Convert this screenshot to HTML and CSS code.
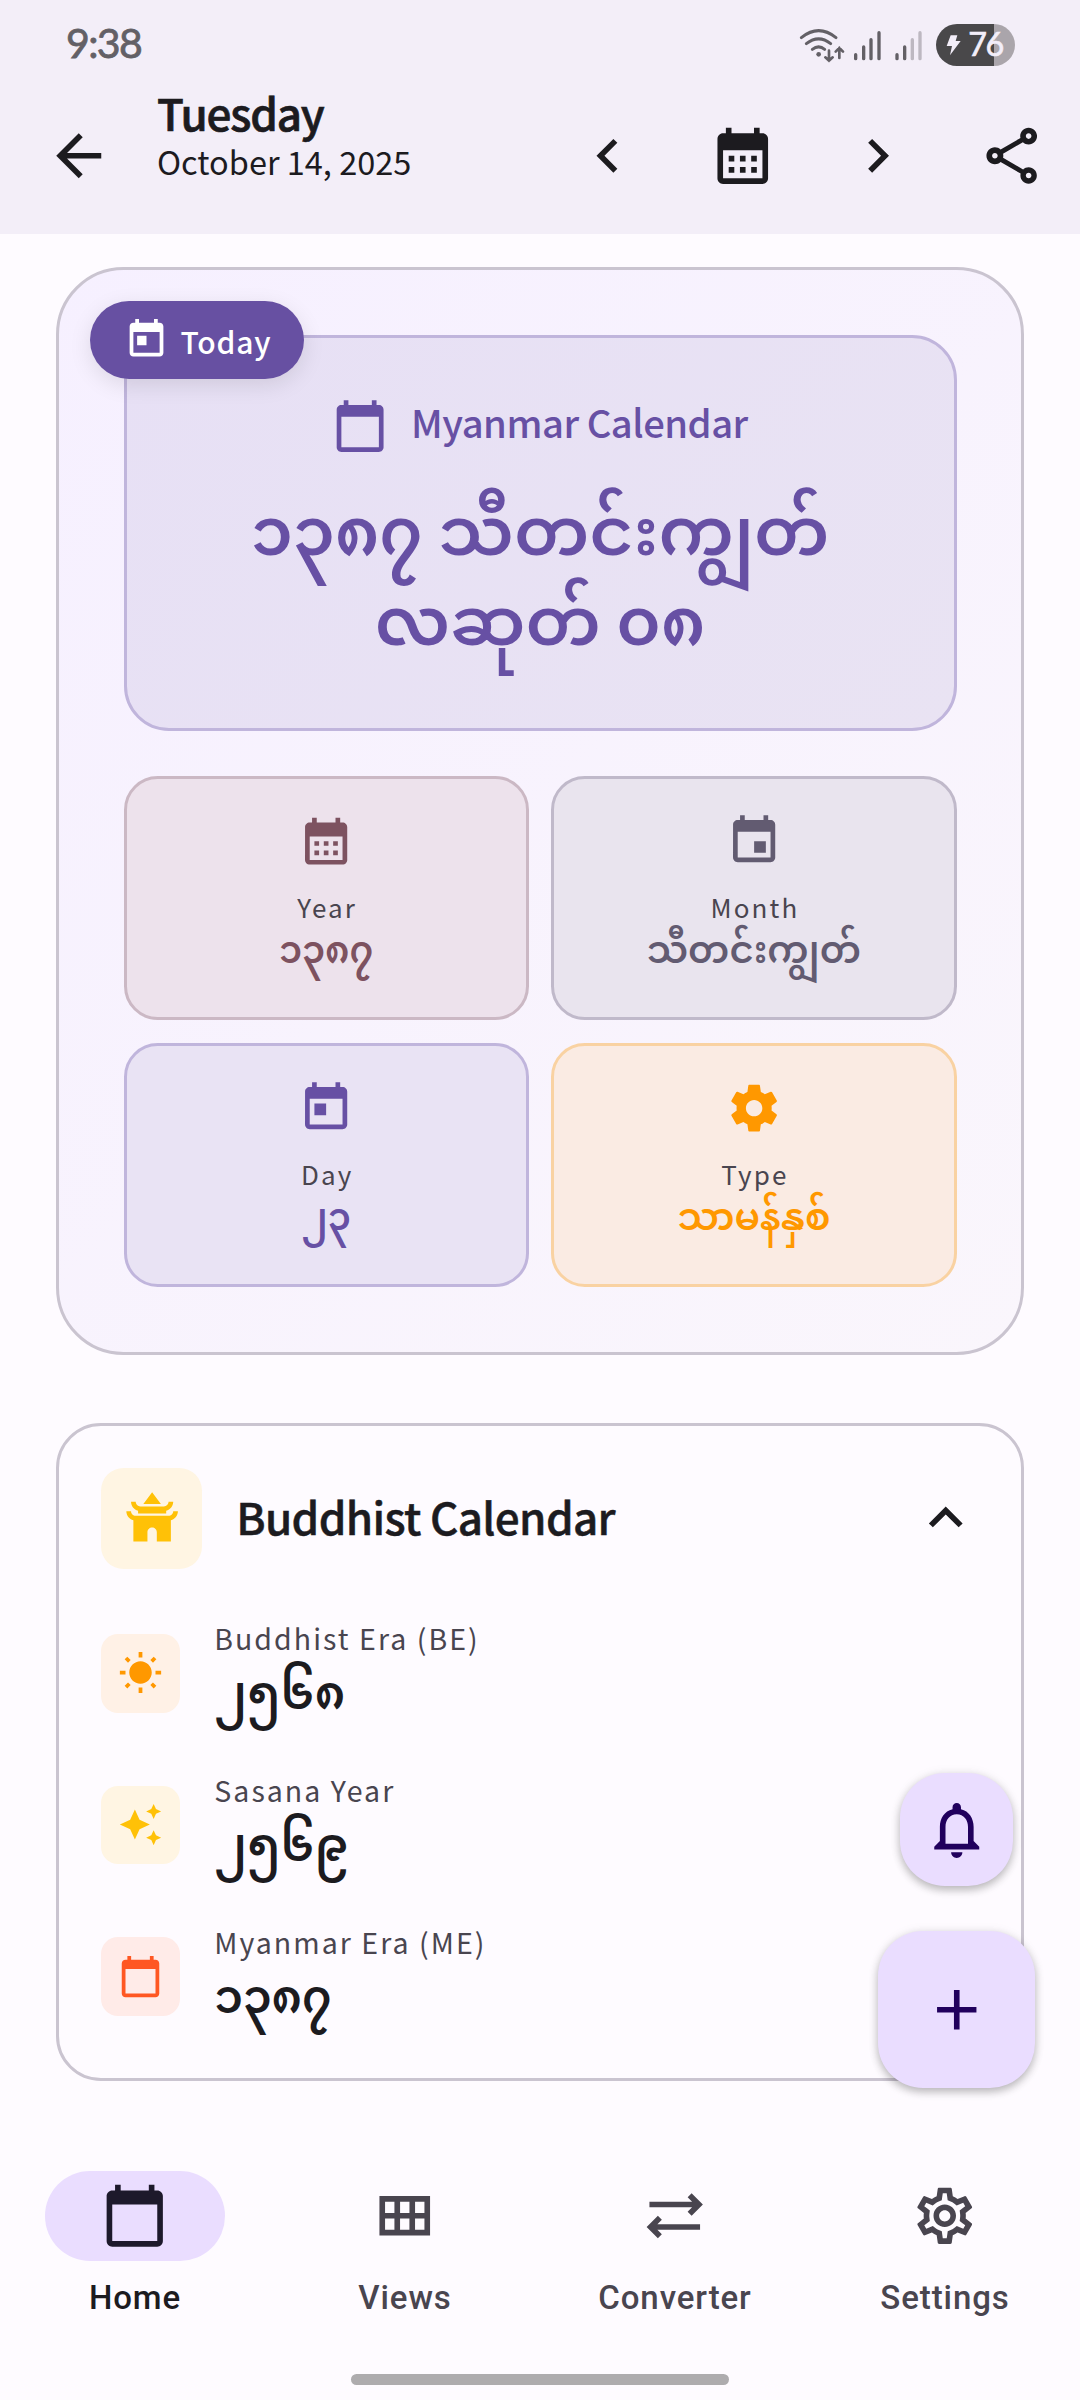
FILE: index.html
```html
<!DOCTYPE html>
<html lang="en">
<head>
<meta charset="utf-8">
<title>Myanmar Calendar</title>
<link rel="stylesheet" href="styles.css">
</head>
<body>
<svg class="defs" width="0" height="0" aria-hidden="true">
  <symbol id="back" viewBox="0 0 24 24"><path d="M20 11H7.83l5.59-5.59L12 4l-8 8 8 8 1.41-1.41L7.83 13H20v-2z"/></symbol>
  <symbol id="left" viewBox="0 0 24 24"><path d="M15.41 7.41L14 6l-6 6 6 6 1.41-1.41L10.83 12z"/></symbol>
  <symbol id="right" viewBox="0 0 24 24"><path d="M10 6L8.59 7.41 13.17 12l-4.58 4.59L10 18l6-6z"/></symbol>
  <symbol id="up" viewBox="0 0 24 24"><path d="M12 8l-6 6 1.41 1.41L12 10.83l4.59 4.58L18 14z"/></symbol>
  <symbol id="month-grid" viewBox="0 0 24 24"><path d="M19 4h-1V2h-2v2H8V2H6v2H5c-1.11 0-1.99.9-1.99 2L3 20c0 1.1.89 2 2 2h14c1.1 0 2-.9 2-2V6c0-1.1-.9-2-2-2zm0 16H5V10h14v10zM9 14H7v-2h2v2zm4 0h-2v-2h2v2zm4 0h-2v-2h2v2zm-8 4H7v-2h2v2zm4 0h-2v-2h2v2zm4 0h-2v-2h2v2z"/></symbol>
  <symbol id="share" viewBox="0 0 24 24"><path d="M18 16.08c-.76 0-1.44.3-1.96.77L8.91 12.7c.05-.23.09-.46.09-.7s-.04-.47-.09-.7l7.05-4.11c.54.5 1.25.81 2.04.81 1.66 0 3-1.34 3-3s-1.34-3-3-3-3 1.34-3 3c0 .24.04.47.09.7L8.04 9.81C7.5 9.31 6.79 9 6 9c-1.66 0-3 1.34-3 3s1.34 3 3 3c.79 0 1.5-.31 2.04-.81l7.12 4.16c-.05.21-.08.43-.08.65 0 1.61 1.31 2.92 2.92 2.92s2.92-1.31 2.92-2.92-1.31-2.92-2.92-2.92zM18 4c.55 0 1 .45 1 1s-.45 1-1 1-1-.45-1-1 .45-1 1-1zM6 13c-.55 0-1-.45-1-1s.45-1 1-1 1 .45 1 1-.45 1-1 1zm12 7.02c-.55 0-1-.45-1-1s.45-1 1-1 1 .45 1 1-.45 1-1 1z"/></symbol>
  <symbol id="today" viewBox="0 0 24 24"><path d="M19 3h-1V1h-2v2H8V1H6v2H5c-1.11 0-1.99.9-1.99 2L3 19c0 1.1.89 2 2 2h14c1.1 0 2-.9 2-2V5c0-1.1-.9-2-2-2zm0 16H5V8h14v11zM7 10h5v5H7z"/></symbol>
  <symbol id="event" viewBox="0 0 24 24"><path d="M17 12h-5v5h5v-5zM16 1v2H8V1H6v2H5c-1.11 0-1.99.9-1.99 2L3 19c0 1.1.89 2 2 2h14c1.1 0 2-.9 2-2V5c0-1.1-.9-2-2-2h-1V1h-2zm3 18H5V8h14v11z"/></symbol>
  <symbol id="calendar" viewBox="0 0 24 24"><path d="M20 3h-1V1h-2v2H7V1H5v2H4c-1.1 0-2 .9-2 2v16c0 1.1.9 2 2 2h16c1.1 0 2-.9 2-2V5c0-1.1-.9-2-2-2zm0 18H4V8h16v13z"/></symbol>
  <symbol id="gear" viewBox="0 0 24 24"><path d="M19.43 12.98c.04-.32.07-.64.07-.98s-.03-.66-.07-.98l2.11-1.65c.19-.15.24-.42.12-.64l-2-3.46c-.12-.22-.39-.3-.61-.22l-2.49 1c-.52-.4-1.08-.73-1.69-.98l-.38-2.65C14.46 2.18 14.25 2 14 2h-4c-.25 0-.46.18-.49.42l-.38 2.65c-.61.25-1.17.59-1.69.98l-2.49-1c-.23-.09-.49 0-.61.22l-2 3.46c-.13.22-.07.49.12.64l2.11 1.65c-.04.32-.07.65-.07.98s.03.66.07.98l-2.11 1.65c-.19.15-.24.42-.12.64l2 3.46c.12.22.39.3.61.22l2.49-1c.52.4 1.08.73 1.69.98l.38 2.65c.03.24.24.42.49.42h4c.25 0 .46-.18.49-.42l.38-2.65c.61-.25 1.17-.59 1.69-.98l2.49 1c.23.09.49 0 .61-.22l2-3.46c.12-.22.07-.49-.12-.64l-2.11-1.65zM12 15.5c-1.93 0-3.5-1.57-3.5-3.5s1.57-3.5 3.5-3.5 3.5 1.57 3.5 3.5-1.57 3.5-3.5 3.5z"/></symbol>
  <symbol id="gear-outline" viewBox="0 0 24 24"><path d="M19.43 12.98c.04-.32.07-.64.07-.98 0-.34-.03-.66-.07-.98l2.11-1.65c.19-.15.24-.42.12-.64l-2-3.46c-.09-.16-.26-.25-.44-.25-.06 0-.12.01-.17.03l-2.49 1c-.52-.4-1.08-.73-1.69-.98l-.38-2.65C14.46 2.18 14.25 2 14 2h-4c-.25 0-.46.18-.49.42l-.38 2.65c-.61.25-1.17.59-1.69.98l-2.49-1c-.06-.02-.12-.03-.18-.03-.17 0-.34.09-.43.25l-2 3.46c-.13.22-.07.49.12.64l2.11 1.65c-.04.32-.07.65-.07.98 0 .33.03.66.07.98l-2.11 1.65c-.19.15-.24.42-.12.64l2 3.46c.09.16.26.25.44.25.06 0 .12-.01.17-.03l2.49-1c.52.4 1.08.73 1.69.98l.38 2.65c.03.24.24.42.49.42h4c.25 0 .46-.18.49-.42l.38-2.65c.61-.25 1.17-.59 1.69-.98l2.49 1c.06.02.12.03.18.03.17 0 .34-.09.43-.25l2-3.46c.12-.22.07-.49-.12-.64l-2.11-1.65zm-1.98-1.71c.04.31.05.52.05.73 0 .21-.02.43-.05.73l-.14 1.13.89.7 1.08.84-.7 1.21-1.27-.51-1.04-.42-.9.68c-.43.32-.84.56-1.25.73l-1.06.43-.16 1.13-.2 1.35h-1.4l-.19-1.35-.16-1.13-1.06-.43c-.43-.18-.83-.41-1.23-.71l-.91-.7-1.06.43-1.27.51-.7-1.21 1.08-.84.89-.7-.14-1.13c-.03-.31-.05-.54-.05-.74s.02-.43.05-.73l.14-1.13-.89-.7-1.08-.84.7-1.21 1.27.51 1.04.42.9-.68c.43-.32.84-.56 1.25-.73l1.06-.43.16-1.13.2-1.35h1.39l.19 1.35.16 1.13 1.06.43c.43.18.83.41 1.23.71l.91.7 1.06-.43 1.27-.51.7 1.21-1.07.85-.89.7.14 1.13zM12 8c-2.21 0-4 1.79-4 4s1.79 4 4 4 4-1.79 4-4-1.79-4-4-4zm0 6c-1.1 0-2-.9-2-2s.9-2 2-2 2 .9 2 2-.9 2-2 2z"/></symbol>
  <symbol id="temple" viewBox="0 0 24 24"><path d="M21 9.02c0 1.09-.89 1.98-1.98 1.98H4.98C3.89 11 3 10.11 3 9.02H1c0 1.86 1.28 3.4 3 3.84V22h6v-4c0-1.1.9-2 2-2s2 .9 2 2v4h6v-9.14c1.72-.44 3-1.98 3-3.84h-2zM6 8.86V10h12V8.86c1.72-.44 3-1.98 3-3.84h-2C19 6.11 18.11 7 17.02 7H6.98C5.89 7 5 6.11 5 5.02H3c0 1.86 1.28 3.4 3 3.84zM12 1L8.25 6h7.5L12 1z"/></symbol>
  <symbol id="sun" viewBox="0 0 24 24"><path d="M6.76 4.84l-1.8-1.79-1.41 1.41 1.79 1.79 1.42-1.41zM4 10.5H1v2h3v-2zm9-9.95h-2V3.5h2V.55zm7.45 3.91l-1.41-1.41-1.79 1.79 1.41 1.41 1.79-1.79zm-3.21 13.7l1.79 1.8 1.41-1.41-1.8-1.79-1.4 1.4zM20 10.5v2h3v-2h-3zm-8-5c-3.31 0-6 2.69-6 6s2.69 6 6 6 6-2.69 6-6-2.69-6-6-6zm-1 16.95h2V19.5h-2v2.95zm-7.45-3.91l1.41 1.41 1.79-1.8-1.41-1.41-1.79 1.8z"/></symbol>
  <symbol id="sparkle" viewBox="0 0 24 24"><path d="M19 9l1.25-2.75L23 5l-2.75-1.25L19 1l-1.25 2.75L15 5l2.75 1.25L19 9zm-7.5.5L9 4 6.5 9.5 1 12l5.5 2.5L9 20l2.5-5.5L17 12l-5.5-2.5zM19 15l-1.25 2.75L15 19l2.75 1.25L19 23l1.25-2.75L23 19l-2.75-1.25L19 15z"/></symbol>
  <symbol id="bell" viewBox="0 0 24 24"><path d="M12 22c1.1 0 2-.9 2-2h-4c0 1.1.9 2 2 2zm6-6v-5c0-3.07-1.63-5.64-4.5-6.32V4c0-.83-.67-1.5-1.5-1.5s-1.5.67-1.5 1.5v.68C7.64 5.36 6 7.92 6 11v5l-2 2v1h16v-1l-2-2zm-2 1H8v-6c0-2.48 1.51-4.5 4-4.5s4 2.02 4 4.5v6z"/></symbol>
  <symbol id="plus" viewBox="0 0 24 24"><path d="M19 13h-6v6h-2v-6H5v-2h6V5h2v6h6v2z"/></symbol>
  <symbol id="grid" viewBox="0 0 24 24"><path d="M3 5v14h18V5H3zm16 6h-3.33V7H19v4zm-5.33 0h-3.33V7h3.33v4zM8.33 7v4H5V7h3.33zM5 17v-4h3.33v4H5zm5.33 0v-4h3.33v4h-3.33zm5.33 0v-4H19v4h-3.33z"/></symbol>
  <symbol id="swap" viewBox="0 0 24 24"><path d="M22 8l-4-4-1.41 1.41L18.17 7H3v2h15.17l-1.59 1.59L18 12l4-4zM2 16l4 4 1.41-1.41L5.83 17H21v-2H5.83l1.59-1.59L6 12l-4 4z"/></symbol>
</svg>

<header class="top">
  <div class="status">
    <span class="clock">9:38</span>
    <svg class="indicators" width="240" height="70" viewBox="0 0 720 210">
      <g fill="none" stroke="#636066" stroke-width="9" stroke-linecap="round">
        <path d="M34 83Q86 41 138 83M49 101Q86 72 122 101M67 118Q86 103 104 118"/>
        <path d="M117 122V152M106 142L117 152L128 142M148 144V114M137 125L148 114L159 125" stroke-width="8"/>
        <path d="M197 134V146M221 111V146M243 89V146M267 68V146M321 134V146M344 111V146" stroke-width="10"/>
        <path d="M367 89V146M390 68V146" stroke="#bdb8c1" stroke-width="10"/>
      </g>
      <circle cx="86" cy="133" r="7" fill="#636066"/>
      <path d="M501 42H612V168H501A63 63 0 0 1 501 42Z" fill="#49484a"/>
      <path d="M612 42A63 63 0 0 1 612 168Z" fill="#aaa5ab"/>
      <path d="M482 76H502L497 93H512L480 136L486 108H470Z" fill="#f3eef9"/>
      <text x="535" y="139" class="charge">76</text>
    </svg>
  </div>
  <div class="toolbar">
    <svg class="i24 back"><use href="#back"/></svg>
    <div class="heading">
      <h1 class="weekday">Tuesday</h1>
      <p class="date">October 14, 2025</p>
    </div>
    <div class="actions">
      <svg class="i24"><use href="#left"/></svg>
      <svg class="i24"><use href="#month-grid"/></svg>
      <svg class="i24"><use href="#right"/></svg>
      <svg class="i24"><use href="#share"/></svg>
    </div>
  </div>
</header>

<main class="content">
  <section class="summary">
    <div class="badge"><svg class="i16"><use href="#today"/></svg><span>Today</span></div>
    <div class="hero">
      <div class="hero-head"><svg class="i20"><use href="#calendar"/></svg><span class="hero-label">Myanmar Calendar</span></div>
      <div class="hero-date" lang="my">၁၃၈၇ သီတင်းကျွတ်<br>လဆုတ် ၀၈</div>
    </div>
    <div class="tiles">
      <div class="tile year"><svg class="i20"><use href="#month-grid"/></svg><span class="tile-label">Year</span><span class="tile-value" lang="my">၁၃၈၇</span></div>
      <div class="tile month"><svg class="i20"><use href="#event"/></svg><span class="tile-label">Month</span><span class="tile-value" lang="my">သီတင်းကျွတ်</span></div>
      <div class="tile day"><svg class="i20"><use href="#today"/></svg><span class="tile-label">Day</span><span class="tile-value" lang="my">၂၃</span></div>
      <div class="tile type"><svg class="i20"><use href="#gear"/></svg><span class="tile-label">Type</span><span class="tile-value" lang="my">သာမန်နှစ်</span></div>
    </div>
  </section>

  <section class="details">
    <div class="details-head">
      <span class="chip chip-large amber"><svg class="i20"><use href="#temple"/></svg></span>
      <h2 class="details-title">Buddhist Calendar</h2>
      <svg class="i24"><use href="#up"/></svg>
    </div>
    <div class="row">
      <span class="chip orange"><svg class="i16"><use href="#sun"/></svg></span>
      <div><div class="row-label">Buddhist Era (BE)</div><div class="row-value" lang="my">၂၅၆၈</div></div>
    </div>
    <div class="row">
      <span class="chip amber"><svg class="i16"><use href="#sparkle"/></svg></span>
      <div><div class="row-label">Sasana Year</div><div class="row-value" lang="my">၂၅၆၉</div></div>
    </div>
    <div class="row">
      <span class="chip red"><svg class="i16"><use href="#calendar"/></svg></span>
      <div><div class="row-label">Myanmar Era (ME)</div><div class="row-value" lang="my">၁၃၈၇</div></div>
    </div>
  </section>
</main>

<nav class="nav">
  <div class="nav-item active"><span class="pill"><svg class="i24"><use href="#calendar"/></svg></span><span>Home</span></div>
  <div class="nav-item"><span class="pill"><svg class="i24"><use href="#grid"/></svg></span><span>Views</span></div>
  <div class="nav-item"><span class="pill"><svg class="i24"><use href="#swap"/></svg></span><span>Converter</span></div>
  <div class="nav-item"><span class="pill"><svg class="i24"><use href="#gear-outline"/></svg></span><span>Settings</span></div>
</nav>
<div class="home-bar"></div>

<div class="fabs">
  <div class="fab small"><svg class="i24"><use href="#bell"/></svg></div>
  <div class="fab"><svg class="i24"><use href="#plus"/></svg></div>
</div>
</body>
</html>
```
FILE: styles.css
```css
* { box-sizing: border-box; }

body {
  position: relative;
  display: flex;
  flex-direction: column;
  width: 1080px;
  height: 2400px;
  margin: 0;
  overflow: hidden;
  background: #fefbff;
  color: #1c1b1f;
  font-family: "Noto Sans CJK SC", "Noto Sans Myanmar", sans-serif;
}

h1, h2, p { margin: 0; }
svg { display: block; flex: none; fill: currentColor; }
.defs { position: absolute; }
.i16 { width: 45px; height: 45px; }
.i20 { width: 56.25px; height: 56.25px; }
.i24 { width: 67.5px; height: 67.5px; }

/* Header */
.top { height: 234px; background: #f3eef8; }
.status {
  display: flex;
  justify-content: space-between;
  height: 77px;
  padding: 10px 50px 0 66px;
}
.clock {
  font: 400 41px/65px Lato, sans-serif;
  letter-spacing: -1.6px;
  color: #636066;
  -webkit-text-stroke: 0.8px #636066;
}
.charge { font: 400 97px Lato, sans-serif; letter-spacing: -5px; fill: #f3eef9; stroke: #f3eef9; stroke-width: 2px; }
.toolbar {
  display: flex;
  align-items: center;
  height: 157px;
  padding-left: 45px;
}
.heading { width: 417px; margin-left: 44.5px; padding-bottom: 42px; }
.weekday {
  font-size: 44px;
  font-weight: 500;
  line-height: 52px;
  letter-spacing: -1.2px;
  -webkit-text-stroke: 0.7px currentColor;
}
.date { font-size: 32.5px; line-height: 46px; }
.actions { display: flex; gap: 67.3px; }

/* Summary card */
.content { flex: none; height: 1914px; padding: 33px 56px 0; }
.summary {
  position: relative;
  height: 1087.5px;
  padding: 64.5px;
  border: 3px solid #cac4d0;
  border-radius: 67.5px;
  background: linear-gradient(135deg, #f6f0ff, #faf6fc);
}
.badge {
  position: absolute;
  left: 31px;
  top: 30.5px;
  display: flex;
  align-items: center;
  width: 214px;
  height: 78.75px;
  padding-left: 33.5px;
  border-radius: 40px;
  background: #6750a2;
  color: #fff;
  box-shadow: 0 6px 22px rgba(0, 0, 0, .1);
}
.badge span {
  margin: 3px 0 0 12px;
  font-size: 30px;
  font-weight: 500;
  letter-spacing: .8px;
}
.hero {
  height: 396px;
  padding-top: 60.5px;
  border: 3px solid #c0b5dc;
  border-radius: 45px;
  background: linear-gradient(135deg, #e7e0f5, #e9e3f3);
  color: #6750a4;
  text-align: center;
}
.hero-head { display: flex; justify-content: center; align-items: center; gap: 22.5px; height: 56.5px; }
.hero-label { margin-bottom: 9px; font-size: 38.2px; font-weight: 500; letter-spacing: -0.5px; }
.hero-date { margin-top: 26.3px; font-size: 67.5px; font-weight: 600; line-height: 90px; }
.tiles { display: grid; grid-template-columns: 1fr 1fr; gap: 22.5px; margin-top: 45px; }
.tile {
  display: flex;
  flex-direction: column;
  align-items: center;
  height: 244.5px;
  padding-top: 34px;
  border: 3px solid;
  border-radius: 33.75px;
}
.tile-label {
  margin-top: 21.5px;
  padding-left: 2px;
  color: #49454f;
  font-size: 26px;
  line-height: 34px;
  letter-spacing: 2.1px;
}
.tile-value { font-size: 37px; font-weight: 600; line-height: 46.2px; white-space: nowrap; }
.year { color: #7d5260; border-color: #cbb8c4; background: #ede2ec; }
.month { color: #625b71; border-color: #c0b9ca; background: #e9e4ee; }
.day { color: #6750a4; border-color: #c0b5dc; background: #e9e3f4; }
.type { color: #ff9800; border-color: #f9d2a2; background: #faebe3; }

/* Details card */
.details {
  height: 658px;
  margin-top: 68px;
  padding: 42px;
  border: 3px solid #cac4d0;
  border-radius: 45px;
}
.details-head { display: flex; align-items: center; height: 101.25px; margin-bottom: 49.5px; }
.details-title { flex: 1; margin: 0 0 4px 34px; font-size: 44px; font-weight: 500; letter-spacing: -0.65px; -webkit-text-stroke: 0.5px currentColor; }
.chip {
  display: grid;
  place-items: center;
  width: 78.75px;
  height: 78.75px;
  margin-top: 15.5px;
  border-radius: 17px;
}
.chip-large { width: 101.25px; height: 101.25px; margin: 0; border-radius: 22.5px; }
.amber { color: #ffc107; background: #fff5e3; }
.orange { color: #ff9800; background: #fff1e6; }
.red { color: #ff5722; background: #ffebe8; }
.row { display: flex; gap: 34.5px; height: 151.8px; }
.row-label { color: #49454f; font-size: 28.5px; line-height: 40px; letter-spacing: 2.05px; }
.row-value { font-size: 46px; font-weight: 600; line-height: 63.3px; }

/* Bottom navigation */
.nav { display: grid; grid-template-columns: repeat(4, 1fr); height: 226px; padding-top: 22.5px; }
.nav-item {
  display: flex;
  flex-direction: column;
  align-items: center;
  gap: 14px;
  color: #49454f;
  font: 500 33px/45px Roboto, sans-serif;
  letter-spacing: 0.9px;
}
.pill { display: grid; place-items: center; width: 180px; height: 90px; border-radius: 45px; }
.active { color: #1c1b1f; }
.active .pill { background: #eaddff; color: #1d192b; }
.home-bar { width: 378px; height: 11px; margin: 0 auto; border-radius: 6px; background: #aeacae; }

/* Floating actions */
.fabs {
  position: absolute;
  right: 45px;
  top: 1773px;
  display: flex;
  flex-direction: column;
  align-items: center;
  gap: 45px;
}
.fab {
  display: grid;
  place-items: center;
  width: 157.5px;
  height: 157.5px;
  border-radius: 45px;
  background: #eaddff;
  color: #21005d;
  box-shadow: 0 4px 8px rgba(0, 0, 0, .24), 0 1px 12px rgba(0, 0, 0, .08);
}
.small { width: 112.5px; height: 112.5px; }
```
